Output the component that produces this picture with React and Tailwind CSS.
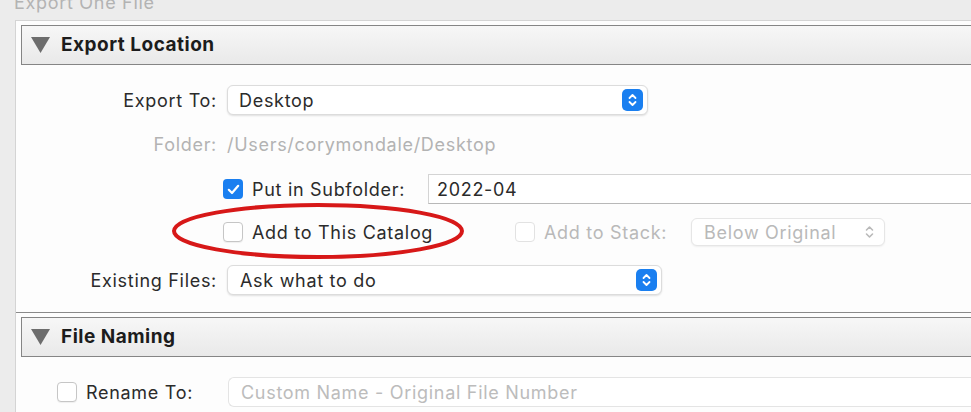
import React from 'react'

const font = { fontFamily: 'Inter, "Noto Sans", sans-serif' }

const Stepper = ({ blue = true }) =>
  blue ? (
    <span className="flex items-center justify-center w-[21px] h-[22px] rounded-[5px] bg-[#1a7ff0]">
      <svg width="9" height="14" viewBox="0 0 9 14" fill="none" stroke="white" strokeWidth="1.8" strokeLinecap="round" strokeLinejoin="round">
        <path d="M1.5 5 L4.5 2 L7.5 5" />
        <path d="M1.5 9 L4.5 12 L7.5 9" />
      </svg>
    </span>
  ) : (
    <svg width="9" height="14" viewBox="0 0 9 14" fill="none" stroke="#b9b9b9" strokeWidth="1.6" strokeLinecap="round" strokeLinejoin="round">
      <path d="M1.5 5 L4.5 2 L7.5 5" />
      <path d="M1.5 9 L4.5 12 L7.5 9" />
    </svg>
  )

const Check = ({ on, dim }) => (
  <span
    className={
      on
        ? 'flex items-center justify-center w-[20px] h-[20px] rounded-[4px] bg-[#1a7ff0] shrink-0'
        : dim
        ? 'w-[20px] h-[20px] rounded-[4px] border border-[#e2e2e2] bg-white shrink-0'
        : 'w-[20px] h-[20px] rounded-[4px] border border-[#c6c6c6] bg-white shadow-[0_1px_1px_rgba(0,0,0,0.06)] shrink-0'
    }
  >
    {on && (
      <svg width="13" height="11" viewBox="0 0 13 11" fill="none" stroke="white" strokeWidth="2.2" strokeLinecap="round" strokeLinejoin="round">
        <path d="M1.8 5.8 L5 9 L11.2 1.8" />
      </svg>
    )}
  </span>
)

const Header = ({ title }) => (
  <div className="ml-[5px] h-[40px] flex items-center border border-r-0 border-[#858585] bg-gradient-to-b from-[#f7f7f7] to-[#e9e9e9]">
    <svg width="20" height="16" viewBox="0 0 20 16" className="ml-[9px]">
      <path d="M0 0 H19 L9.5 16 Z" fill="#6d6d6d" />
    </svg>
    <span className="ml-[10px] text-[19px] font-bold text-[#1c1c1c] tracking-[0.5px]">{title}</span>
  </div>
)

export default function App() {
  return (
    <div style={font} className="w-[971px] h-[412px] overflow-hidden bg-[#ececec] relative tracking-[0.7px]">
      <div className="h-[20px] pl-[14px] overflow-hidden">
        <div className="-mt-[11px] text-[18px] text-[#b3b3b3]">Export One File</div>
      </div>

      <div className="ml-[15px] h-[392px] border-l border-t border-[#d4d4d4] bg-[#fdfdfd] pt-[4px]">
        <Header title="Export Location" />

        <div className="h-[247px] pt-[20px] text-[18px] text-[#2b2b2b]">
          <div className="flex items-center h-[30px]">
            <span className="w-[201px] text-right">Export To:</span>
            <div className="ml-[10px] w-[421px] h-[30px] flex items-center justify-between rounded-[6px] bg-white border border-[#dcdcdc] shadow-[0_1px_2px_rgba(0,0,0,0.12)] pl-[11px] pr-[4px]">
              <span>Desktop</span>
              <Stepper />
            </div>
          </div>

          <div className="flex items-center h-[28px] mt-[15px] text-[#b3b3b3]">
            <span className="w-[201px] text-right">Folder:</span>
            <span className="ml-[10px]">/Users/corymondale/Desktop</span>
          </div>

          <div className="flex items-center h-[30px] mt-[16px]">
            <span className="w-[207px]" />
            <Check on />
            <span className="ml-[9px] w-[176px]">Put in Subfolder:</span>
            <div className="flex-1 h-[30px] flex items-center bg-white border border-r-0 border-[#d4d4d4] border-b-[#b8b8b8] pl-[8px]">
              2022-04
            </div>
          </div>

          <div className="flex items-center h-[28px] mt-[14px]">
            <span className="w-[207px]" />
            <Check />
            <span className="ml-[9px] w-[263px]">Add to This Catalog</span>
            <Check dim />
            <span className="ml-[9px] w-[147px] text-[#b9b9b9]">Add to Stack:</span>
            <div className="w-[194px] h-[28px] flex items-center justify-between rounded-[6px] bg-white border border-[#e6e6e6] shadow-[0_1px_2px_rgba(0,0,0,0.06)] pl-[12px] pr-[10px] text-[#b9b9b9]">
              <span>Below Original</span>
              <Stepper blue={false} />
            </div>
          </div>

          <div className="flex items-center h-[30px] mt-[19px]">
            <span className="w-[201px] text-right">Existing Files:</span>
            <div className="ml-[10px] w-[435px] h-[30px] flex items-center justify-between rounded-[6px] bg-white border border-[#dcdcdc] shadow-[0_1px_2px_rgba(0,0,0,0.12)] pl-[12px] pr-[4px]">
              <span>Ask what to do</span>
              <Stepper />
            </div>
          </div>
        </div>

        <div className="border-t border-[#8a8a8a] pt-[4px]">
          <Header title="File Naming" />
          <div className="flex items-center h-[30px] mt-[20px] text-[18px] text-[#2b2b2b]">
            <span className="w-[41px]" />
            <Check />
            <span className="ml-[9px] w-[142px]">Rename To:</span>
            <div className="flex-1 h-[30px] flex items-center rounded-l-[6px] bg-white border border-r-0 border-[#e4e4e4] pl-[12px] text-[#bcbcbc]">
              Custom Name - Original File Number
            </div>
          </div>
        </div>
      </div>

      <svg className="absolute left-[170px] top-[202px] pointer-events-none" width="298" height="60" viewBox="0 0 298 60">
        <ellipse cx="148" cy="29" rx="144" ry="26" fill="none" stroke="#d71818" strokeWidth="4" />
      </svg>
    </div>
  )
}
